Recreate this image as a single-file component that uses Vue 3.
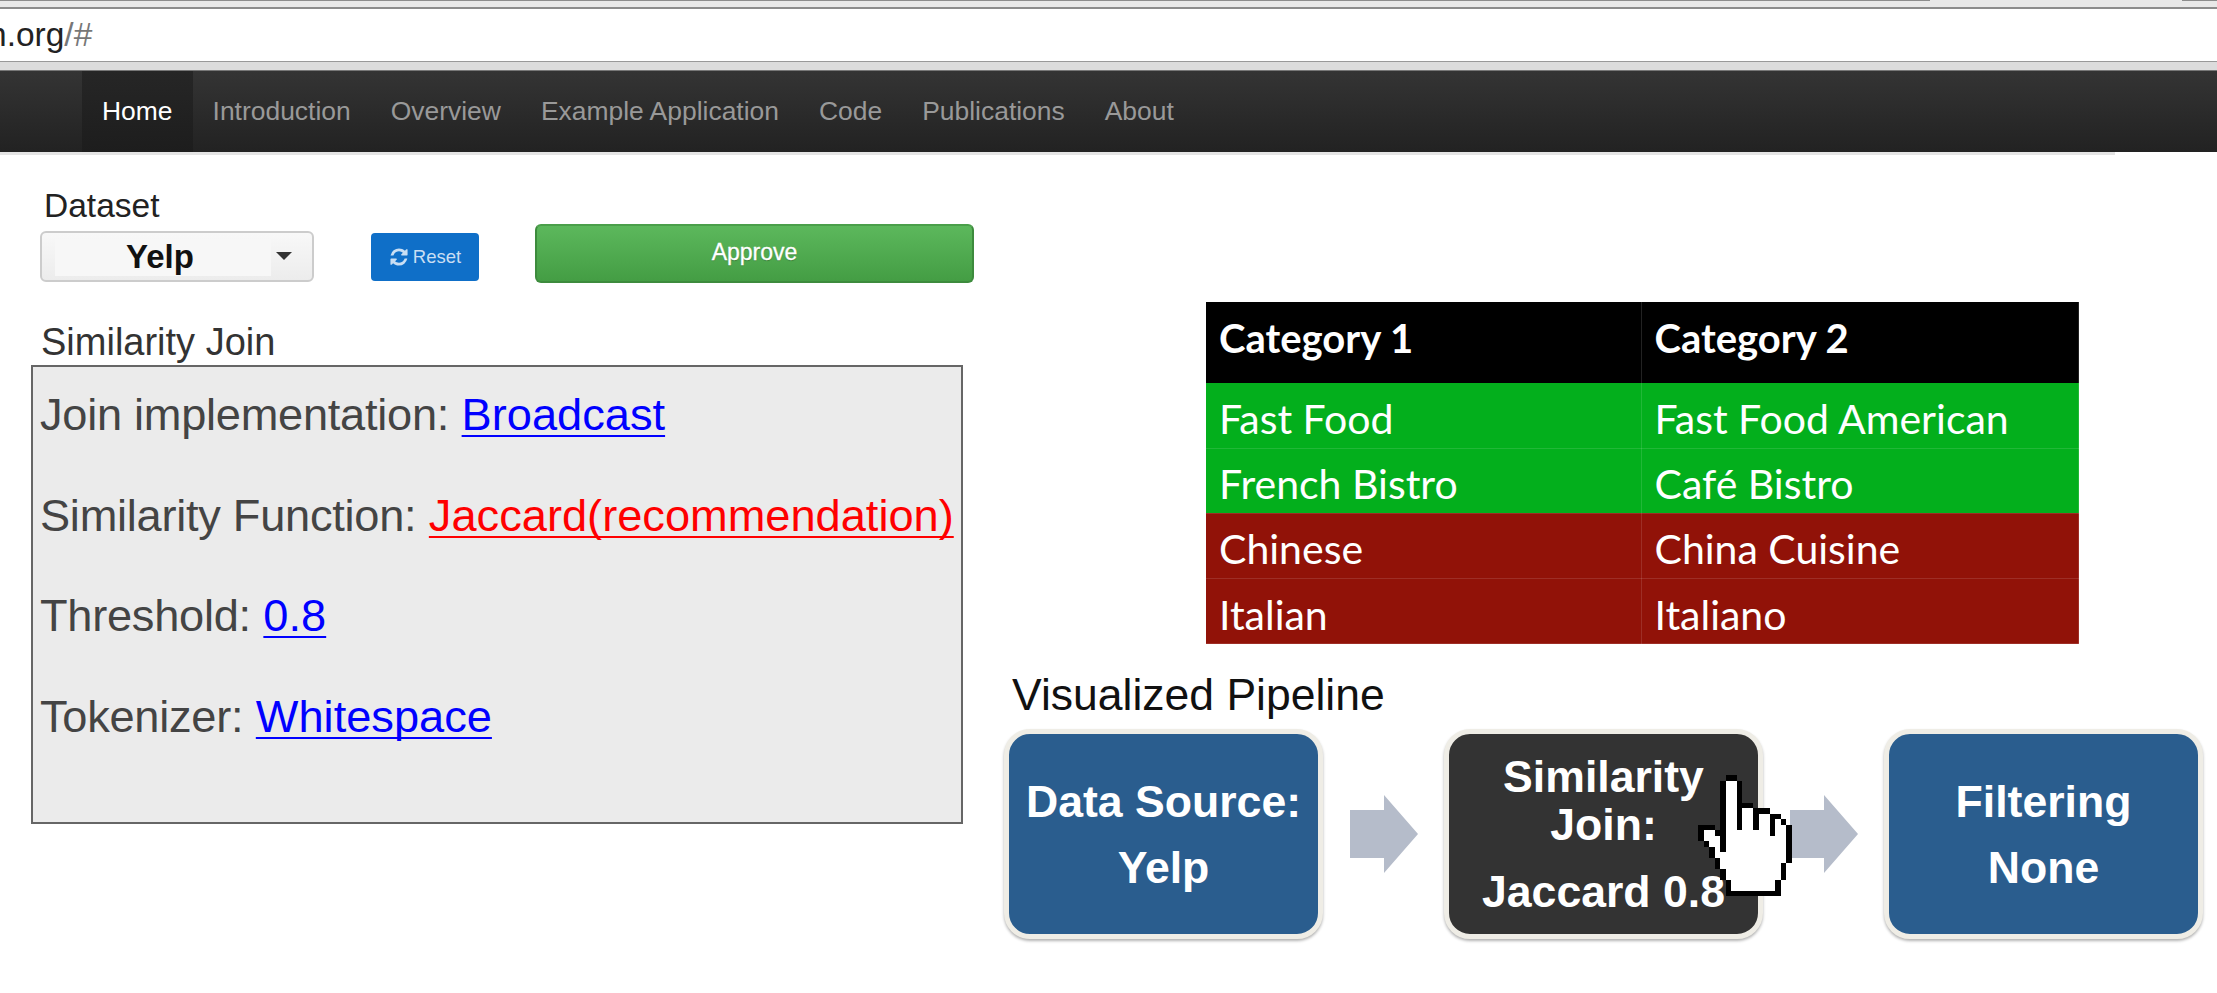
<script setup>
const navItems = ['Introduction', 'Overview', 'Example Application', 'Code', 'Publications', 'About']
const joinRows = [
  { label: 'Join implementation:', value: 'Broadcast', tone: 'blue' },
  { label: 'Similarity Function:', value: 'Jaccard(recommendation)', tone: 'red' },
  { label: 'Threshold:', value: '0.8', tone: 'blue' },
  { label: 'Tokenizer:', value: 'Whitespace', tone: 'blue' }
]
const tableRows = [
  { a: 'Fast Food', b: 'Fast Food American', tone: 'good' },
  { a: 'French Bistro', b: 'Café Bistro', tone: 'good' },
  { a: 'Chinese', b: 'China Cuisine', tone: 'bad' },
  { a: 'Italian', b: 'Italiano', tone: 'bad' }
]
</script>

<template>
  <div class="page">
    <div class="tabs">
      <span class="tab-line tab-left"></span>
      <span class="tab-gap"></span>
      <span class="tab-line tab-right"></span>
    </div>
    <div class="address"><span class="url">n.org<span class="url-dim">/#</span></span></div>
    <div class="strip"></div>

    <nav class="nav">
      <a class="nav-item active">Home</a>
      <a v-for="item in navItems" :key="item" class="nav-item">{{ item }}</a>
    </nav>
    <div class="nav-shadow"></div>

    <main class="main">
      <section class="left-col">
        <div class="controls">
          <div class="field">
            <label class="field-label">Dataset</label>
            <div class="select">
              <span class="select-value">Yelp</span>
              <span class="caret"></span>
            </div>
          </div>
          <button class="btn-reset">
            <svg class="refresh" viewBox="0 0 1792 1792" fill="currentColor"><path d="M1639 1056q0 5-1 7-64 268-268 434.5t-478 166.5q-146 0-282.5-55t-243.5-157l-129 129q-19 19-45 19t-45-19-19-45v-448q0-26 19-45t45-19h448q26 0 45 19t19 45-19 45l-137 137q71 66 161 102t187 36q134 0 250-65t186-179q11-17 53-117 8-23 30-23h192q13 0 22.5 9.5t9.5 22.5zm25-800v448q0 26-19 45t-45 19h-448q-26 0-45-19t-19-45 19-45l138-138q-148-137-349-137-134 0-250 65t-186 179q-11 17-53 117-8 23-30 23h-199q-13 0-22.5-9.5t-9.5-22.5v-7q65-268 270-434.5t480-166.5q146 0 284 55.5t245 156.5l130-129q19-19 45-19t45 19 19 45z"/></svg>
            <span>Reset</span>
          </button>
          <button class="btn-approve">Approve</button>
        </div>

        <h2 class="join-title">Similarity Join</h2>
        <div class="join-box">
          <p v-for="row in joinRows" :key="row.label" class="join-row">
            <span class="join-label">{{ row.label }}</span> <a class="join-link" :class="row.tone">{{ row.value }}</a>
          </p>
        </div>
      </section>

      <section class="right-col">
        <table class="cat-table">
          <thead>
            <tr>
              <th>Category 1</th>
              <th>Category 2</th>
            </tr>
          </thead>
          <tbody>
            <tr v-for="row in tableRows" :key="row.a" :class="row.tone">
              <td>{{ row.a }}</td>
              <td>{{ row.b }}</td>
            </tr>
          </tbody>
        </table>

        <h2 class="pipe-title">Visualized Pipeline</h2>
        <div class="pipeline">
          <div class="stage blue-stage">
            <span class="stage-line">Data Source:</span>
            <span class="stage-line">Yelp</span>
          </div>
          <svg class="arrow" viewBox="0 0 68 78"><path d="M0 15H34V0L68 39L34 78V63H0Z" fill="#b5bcca"/></svg>
          <div class="stage dark-stage">
            <span class="stage-tight">Similarity<br>Join:</span>
            <span class="stage-last">Jaccard 0.8</span>
          </div>
          <svg class="arrow" viewBox="0 0 68 78"><path d="M0 15H34V0L68 39L34 78V63H0Z" fill="#b5bcca"/></svg>
          <div class="stage blue-stage">
            <span class="stage-line">Filtering</span>
            <span class="stage-line">None</span>
          </div>
          <svg class="cursor" viewBox="0 0 17 22" shape-rendering="crispEdges">
            <path fill="#000" d="M5 0H7V1H8V5H10V6H13V7H15V8H16V9H17V16H16V19H15V22H5V19H4V17H3V15H2V13H1V12H0V9H3V10H4V1H5Z"/>
            <path fill="#fff" d="M5 1H7V6H10V7H13V8H15V9H16V16H15V19H14V21H6V19H5V17H4V15H3V13H2V12H1V10H3V11H4V14H5Z"/>
            <path fill="#000" d="M7 6H8V10H7ZM10 7H11V10H10ZM13 8H14V11H13Z"/>
          </svg>
        </div>
      </section>
    </main>
  </div>
</template>

<style scoped>
.page {
  width: 2217px;
  height: 993px;
  overflow: hidden;
  background: #fff;
  font-family: "Liberation Sans", Arial, sans-serif;
}
.tabs {
  display: flex;
  align-items: flex-start;
  height: 7px;
  background: #e8e8e8;
  border-bottom: 2px solid #8c8c8c;
  box-shadow: 0 1px 2px rgba(0, 0, 0, 0.1);
}
.tab-line { height: 1px; background: #8c8c8c; }
.tab-left { width: 1930px; }
.tab-gap { width: 252px; }
.tab-right { flex: 1; }
.address {
  height: 52px;
  background: #fff;
  overflow: hidden;
  display: flex;
  align-items: center;
}
.url {
  font-size: 33.5px;
  line-height: 1;
  color: #222;
  margin-left: -12px;
  white-space: nowrap;
}
.url-dim { color: #777; }
.strip {
  height: 8px;
  background: #dcdcdc;
  border-top: 1px solid #999;
  border-bottom: 1px solid #777;
}
.nav {
  display: flex;
  height: 81px;
  padding-left: 82px;
  background: linear-gradient(#343434, #222);
}
.nav-item {
  display: flex;
  align-items: center;
  padding: 0 20px;
  font-size: 26.45px;
  color: #999;
  white-space: nowrap;
}
.nav-item.active {
  color: #fff;
  background: linear-gradient(#262626, #1d1d1d);
}
.nav-shadow {
  width: 2115px;
  height: 3px;
  background: #e4e4e4;
}
.main {
  display: flex;
  padding-left: 31px;
}
.left-col {
  width: 973px;
  flex: none;
}
.controls {
  display: flex;
  align-items: flex-end;
  padding: 32px 0 0 9px;
}
.field {
  width: 274px;
  display: flex;
  flex-direction: column;
}
.field-label {
  font-size: 33.5px;
  line-height: 38px;
  color: #222;
  margin: 0 0 6px 4px;
}
.select {
  position: relative;
  height: 51px;
  box-sizing: border-box;
  border: 2px solid #ccc;
  border-radius: 6px;
  background: linear-gradient(#f8f8f8, #ececec);
  padding: 6px 41px 4px 13px;
}
.select-value {
  display: block;
  height: 37px;
  line-height: 35px;
  background: #f7f7f7;
  text-align: center;
  font-size: 33px;
  font-weight: 700;
  color: #111;
  padding-right: 6px;
}
.caret {
  position: absolute;
  right: 20px;
  top: 19px;
  width: 0;
  height: 0;
  border-left: 8px solid transparent;
  border-right: 8px solid transparent;
  border-top: 8px solid #333;
}
.btn-reset {
  width: 108px;
  height: 48px;
  margin: 0 0 1px 57px;
  border: 0;
  border-radius: 4px;
  padding: 0;
  background: #0f6fc8;
  color: #c9def3;
  font: 18.5px "Liberation Sans", Arial, sans-serif;
  display: flex;
  align-items: center;
  justify-content: center;
  gap: 4px;
}
.refresh { width: 20px; height: 20px; }
.btn-approve {
  width: 439px;
  height: 59px;
  margin: 0 0 -1px 56px;
  box-sizing: border-box;
  border: 2px solid #3d8b3d;
  border-top-color: #4a9f4a;
  border-radius: 6px;
  background: linear-gradient(#5cb85c, #449d44);
  color: #fff;
  font: 23px "Liberation Sans", Arial, sans-serif;
  -webkit-text-stroke: 0.3px #fff;
  padding: 0 0 3px;
  text-shadow: 0 1px 1px rgba(0, 0, 0, 0.25);
}
.join-title {
  margin: 37px 0 0 10px;
  font-size: 38px;
  line-height: 46px;
  font-weight: 400;
  color: #333;
}
.join-box {
  width: 932px;
  height: 459px;
  box-sizing: border-box;
  border: 2px solid #666;
  background: #ebebeb;
  padding-left: 7px;
  display: flex;
  flex-direction: column;
  gap: 4.7px;
}
.join-row {
  margin: 0;
  font-size: 45.2px;
  line-height: 96px;
  color: #444;
  white-space: nowrap;
}
.join-label { letter-spacing: -0.27px; }
.join-link {
  text-decoration: underline;
  text-decoration-thickness: 2px;
  text-underline-offset: 5px;
  text-decoration-skip-ink: none;
}
.join-link.blue { color: #00f; }
.join-link.red { color: #f00; }
.right-col {
  flex: 1;
  padding-top: 147px;
}
.cat-table {
  margin-left: 202px;
  width: 873px;
  border-collapse: collapse;
  table-layout: fixed;
  font-family: Lato, sans-serif;
  color: #fff;
}
.cat-table th {
  height: 81px;
  padding: 0 0 10px 13px;
  box-sizing: border-box;
  background: #000;
  text-align: left;
  font-size: 40px;
  font-weight: 700;
  border-right: 1px solid #222;
}
.cat-table th:first-child { width: 435px; }
.cat-table td {
  height: 65.2px;
  padding: 6px 0 0 13px;
  box-sizing: border-box;
  font-size: 41px;
  border-right: 1px solid rgba(255, 255, 255, 0.12);
  border-bottom: 1px solid rgba(255, 255, 255, 0.12);
}
.cat-table tr.good { background: #03af1c; }
.cat-table tr.bad { background: #911208; }
.pipe-title {
  margin: 26px 0 0 8px;
  font-size: 44.5px;
  line-height: 50px;
  font-weight: 400;
  color: #111;
}
.pipeline {
  position: relative;
  display: flex;
  align-items: center;
  margin-top: 9px;
}
.stage {
  width: 319px;
  height: 210px;
  flex: none;
  box-sizing: border-box;
  border: 5px solid #efede6;
  border-radius: 26px;
  box-shadow: 0 2px 3px rgba(0, 0, 0, 0.3);
  color: #fff;
  font-size: 44.6px;
  font-weight: 700;
  text-align: center;
  display: flex;
  flex-direction: column;
  justify-content: center;
  white-space: nowrap;
}
.blue-stage { background: #2a5d8e; padding-top: 2px; }
.dark-stage {
  background: #333;
  justify-content: flex-start;
  padding-top: 19px;
}
.stage-line { line-height: 66px; }
.stage-tight { line-height: 47.5px; }
.stage-last { line-height: 66px; margin-top: 11px; }
.arrow {
  width: 68px;
  height: 78px;
  flex: none;
  margin: 0 26px 0 27px;
}
.cursor {
  position: absolute;
  left: 694px;
  top: 46px;
  width: 94px;
  height: 121px;
}
</style>

<style>
html, body { margin: 0; background: #fff; overflow: hidden; }
</style>
